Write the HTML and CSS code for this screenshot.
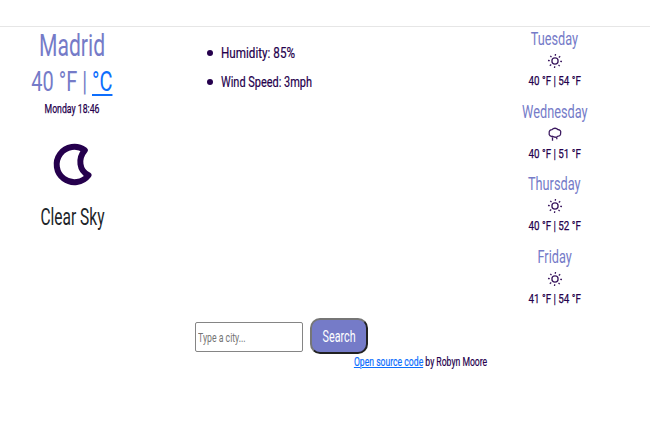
FILE: index.html
```html
<!DOCTYPE html>
<html lang="en">
<head>
<meta charset="utf-8">
<title>Weather</title>
<link rel="stylesheet" href="styles.css">
</head>
<body>
<header class="top"></header>
<main class="weather">
  <section class="current">
    <h1 class="city"><span class="narrow">Madrid</span></h1>
    <h2 class="temp"><span class="narrow">40 °F | <a href="#">°C</a></span></h2>
    <p class="time"><span class="narrow">Monday 18:46</span></p>
    <svg class="moon" viewBox="0 0 44 46" width="44" height="46"><path d="M34.800 9.200A17.700 17.700 0 1 0 38.500 34.200C29 29.500 27.800 17.500 34.800 9.200Z"/></svg>
    <p class="sky"><span class="narrow">Clear Sky</span></p>
  </section>
  <section class="middle">
    <ul class="details">
      <li><span class="narrow humidity">Humidity: 85%</span></li>
      <li><span class="narrow wind">Wind Speed: 3mph</span></li>
    </ul>
    <form class="search">
      <div class="field"><span class="narrow">Type a city...</span></div>
      <button type="button"><span class="narrow">Search</span></button>
    </form>
    <p class="credit"><span class="narrow"><a href="#">Open source code</a> by Robyn Moore</span></p>
  </section>
  <section class="forecast">
    <article><h3><span class="narrow">Tuesday</span></h3>
      <svg class="icon" viewBox="0 0 16 16" width="16" height="16"><circle cx="8" cy="8" r="3.1"/><path d="M8.500 1L8.300 2.800M7.700 13.200L7.500 15M1 7.500l1.800.2M13.200 8.300L15 8.500M3.300 2.800l1.200 1.400M11.500 11.800L12.700 13.200M2.800 12.700l1.400-1.200M11.800 4.500L13.200 3.300"/></svg>
      <p><span class="narrow">40 °F | 54 °F</span></p></article>
    <article><h3><span class="narrow">Wednesday</span></h3>
      <svg class="icon" viewBox="0 0 16 16" width="16" height="16"><path d="M5.500 10.300C4 11 1.600 9.500 2.200 7C1.800 5 3.500 3.600 5 3.600C6.500 1.800 9.500 1.800 10.800 3.500C13 3.700 14.300 5.300 13.600 7C14 9 12.500 10.200 11 10.200C9.500 11.300 7 11.300 5.500 10.300ZM5.500 11.500v3.300M9.800 11.500v1.800"/></svg>
      <p><span class="narrow">40 °F | 51 °F</span></p></article>
    <article><h3><span class="narrow">Thursday</span></h3>
      <svg class="icon" viewBox="0 0 16 16" width="16" height="16"><circle cx="8" cy="8" r="3.1"/><path d="M8.500 1L8.300 2.800M7.700 13.200L7.500 15M1 7.500l1.800.2M13.200 8.300L15 8.500M3.300 2.800l1.200 1.400M11.500 11.800L12.700 13.200M2.800 12.700l1.400-1.200M11.800 4.500L13.200 3.300"/></svg>
      <p><span class="narrow">40 °F | 52 °F</span></p></article>
    <article><h3><span class="narrow">Friday</span></h3>
      <svg class="icon" viewBox="0 0 16 16" width="16" height="16"><circle cx="8" cy="8" r="3.1"/><path d="M8.500 1L8.300 2.800M7.700 13.200L7.500 15M1 7.500l1.800.2M13.200 8.300L15 8.500M3.300 2.800l1.200 1.400M11.500 11.800L12.700 13.200M2.800 12.700l1.400-1.200M11.800 4.500L13.200 3.300"/></svg>
      <p><span class="narrow">41 °F | 54 °F</span></p></article>
  </section>
</main>
</body>
</html>
```
FILE: styles.css
```css
* { box-sizing: border-box; }
body { margin: 0; background: #fff; color: #25004d; font-family: Roboto, "Liberation Sans", sans-serif; }
h1, h2, h3, p, ul { margin: 0; padding: 0; font-weight: 400; }
a { color: #0d6efd; }
.narrow { display: inline-block; white-space: nowrap; transform: scaleX(.67); }
.top { height: 27px; border-bottom: 1px solid #e6e6e6; }
.weather { display: grid; grid-template-columns: 144px 343px 1fr; }

.current { display: flex; flex-direction: column; align-items: center; }
.city { font-size: 32px; line-height: 37px; color: #757bc8; }
.city .narrow { transform: scaleX(.66); }
.temp { font-size: 28px; line-height: 35px; color: #757bc8; }
.temp .narrow { transform: scaleX(.713); }
.temp a { text-decoration-thickness: 2px; text-underline-offset: 3px; }
.time { font-size: 13px; line-height: 19px; -webkit-text-stroke: .25px; }
.moon { margin: 23px 0 17px; fill: none; stroke: #25004d; stroke-width: 6; stroke-linejoin: round; }
.sky { font-size: 23px; line-height: 28px; color: #212529; }
.sky .narrow { transform: scaleX(.674); }

.middle { padding: 12px 0 0 51px; }
.details { height: 279px; padding-left: 26px; list-style: none; font-size: 15.5px; line-height: 28.500px; -webkit-text-stroke: .2px; }
.details li { display: flex; align-items: center; }
.details li::before { content: ""; width: 6px; height: 6px; margin: 0 8px 0 -14px; border-radius: 50%; background: currentColor; }
.details .narrow { transform-origin: left; }
.details .humidity { transform: scaleX(.753); }
.details .wind { transform: scaleX(.706); }
.search { display: flex; align-items: center; gap: 7px; height: 35px; }
.field { width: 108px; height: 30px; margin-top: 3px; padding-left: 2px; border: 1px solid #858585; border-radius: 2px; font-size: 13px; line-height: 29px; color: #757575; }
.field .narrow { transform-origin: left; }
.search button { width: 58px; height: 36px; padding: 0; display: flex; align-items: center; justify-content: center; border: 2px solid; border-color: #767676 #212121 #212121 #767676; border-radius: 10px; background: #757bc8; color: #fff; font: 17px Roboto, sans-serif; }
.search .narrow { flex: none; }
.search button .narrow { transform: scaleX(.632); }
.credit { text-align: right; font-size: 12.5px; line-height: 18px; -webkit-text-stroke: .2px; }
.credit .narrow { transform: scaleX(.69); transform-origin: right; }

.forecast { width: 135px; }
.forecast article { display: flex; flex-direction: column; align-items: center; height: 72.500px; }
.forecast h3 { font-size: 19px; line-height: 24px; color: #757bc8; }
.forecast p { font-size: 13px; line-height: 19px; -webkit-text-stroke: .25px; }
.forecast p .narrow { transform: scaleX(.755); }
.icon { margin: 2px 0; fill: none; stroke: #3c1a60; stroke-width: 1.3; }
```
